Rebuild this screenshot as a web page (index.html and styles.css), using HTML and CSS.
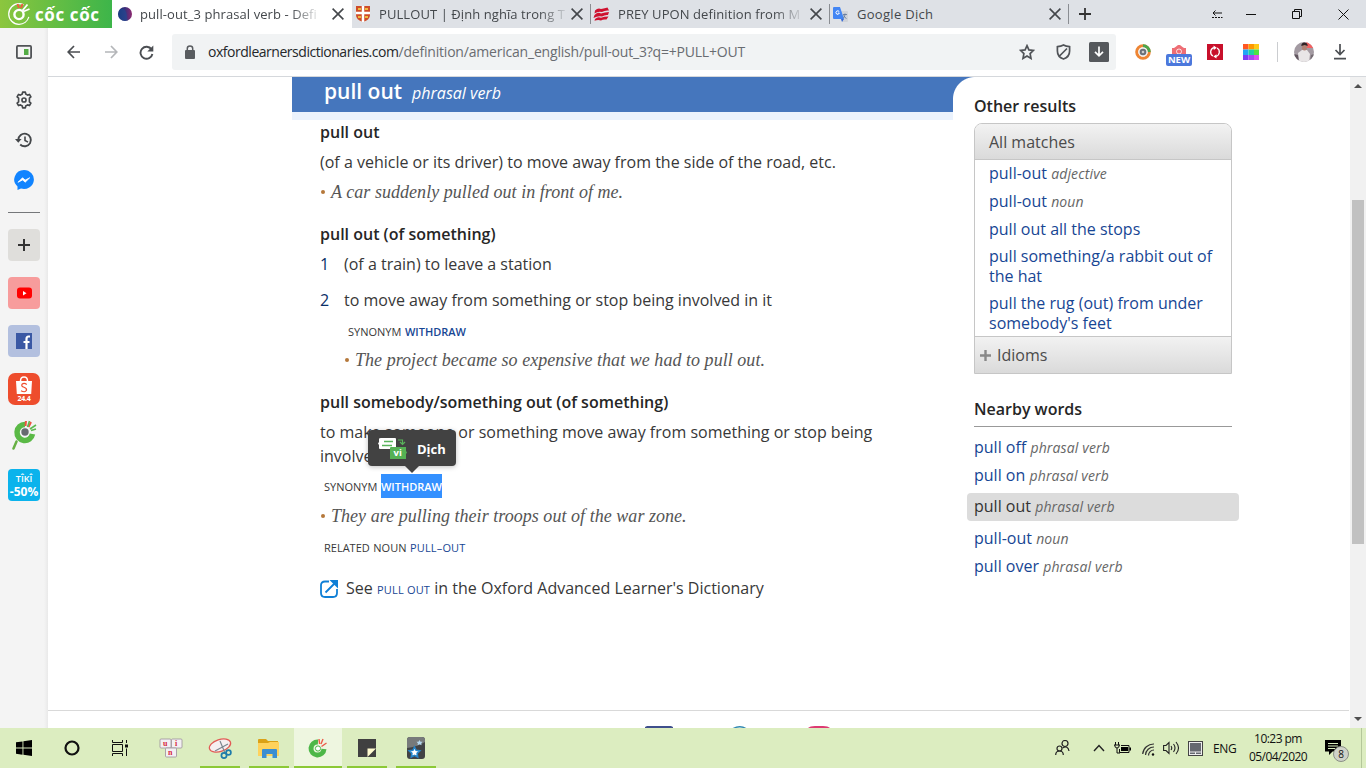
FILE: index.html
```html
<!DOCTYPE html>
<html lang="en">
<head>
<meta charset="utf-8">
<title>pull-out_3 phrasal verb</title>
<link rel="stylesheet" href="styles.css">
</head>
<body>
<div class="screen">
  <header class="tabbar">
    <div class="brand">
      <svg width="26" height="28" viewBox="0 0 26 28" fill="none"><circle cx="13" cy="14" r="10.300" stroke="#fff" stroke-width="1.200" stroke-dasharray="50 15" stroke-dashoffset="-3"/><circle cx="13" cy="14.500" r="4.600" stroke="#fff" stroke-width="2.400"/><path d="M11.500 4l1.500 4M16.500 4L15 8" stroke="#f05b3d" stroke-width="2"/><path d="M21.500 4.500l-5 6M23.500 9l-6 2.500" stroke="#fff" stroke-width="1.800"/></svg>
      <span class="wordmark">cốc cốc</span>
    </div>
    <div class="tab tab-active">
      <svg class="fav" width="14" height="14" viewBox="0 0 14 14"><defs><linearGradient id="ox" x1="0" x2="1"><stop offset="0" stop-color="#16276a"/><stop offset=".5" stop-color="#39307c"/><stop offset="1" stop-color="#8e286f"/></linearGradient></defs><circle cx="7" cy="7" r="7" fill="url(#ox)"/><path d="M2.200 2Q8 0 9 9q0 3 1 4.200Q6 15 2 12Q-1.500 7 2.200 2" fill="#1e4c95" opacity=".6"/></svg>
      <span class="tab-title">pull-out_3 phrasal verb - Defi</span>
      <svg class="close" width="12" height="12" viewBox="0 0 12 12"><path d="M.6.6l10.800 10.800M11.400.6L.6 11.400"/></svg>
    </div>
    <div class="tab tab-2">
      <svg class="fav" width="14" height="16" viewBox="0 0 14 16"><path d="M0 0h14v9q0 5-7 7q-7-2-7-7z" fill="#cf4c28"/><path d="M7 0v16M0 7h14" stroke="#fff" stroke-width="2.500"/><path d="M2 3h3M9 3h3M2 11h3M9 11h3" stroke="#efbc3f" stroke-width="2"/></svg>
      <span class="tab-title">PULLOUT | Định nghĩa trong T</span>
      <svg class="close" width="12" height="12" viewBox="0 0 12 12"><path d="M.6.6l10.800 10.800M11.400.6L.6 11.400"/></svg>
    </div>
    <div class="tab tab-3">
      <svg class="fav" width="17" height="14" viewBox="0 0 17 14"><path d="M2 3.500Q5 .5 8 2Q12 1 14.500.5L16 3.500Q12 3 9 5Q5 4 1.500 6.500zM1.500 8Q5 4.500 8 6.500Q12 5 16 5L15 8Q12 7.500 9 9.500Q5 8.500.5 11zM2 12Q5 9 8 10.800Q11 9.500 15.500 9.500L13.500 12.500Q10 12 8 13.500Q5 12.500 1.500 13.800z" fill="#cf1230"/></svg>
      <span class="tab-title">PREY UPON definition from M</span>
      <svg class="close" width="12" height="12" viewBox="0 0 12 12"><path d="M.6.6l10.800 10.800M11.400.6L.6 11.400"/></svg>
    </div>
    <div class="tab tab-4">
      <svg class="fav" width="15" height="15" viewBox="0 0 15 15"><path d="M5 4h9q1 0 1 1v9q0 1-1 1H9z" fill="#d0d3d8"/><path d="M1 0h6l4 12H1q-1 0-1-1V1q0-1 1-1" fill="#4285f4"/><path d="M8 12h3l-2 3z" fill="#3367d6"/><path d="M6.300 4.500Q5 3.200 3.600 4.200q-1.400 1.300 0 2.800q1.800 1.200 2.800-.9H4.900" stroke="#fff" fill="none"/><path d="M10 7.500h4M12 6.500v1q0 2-2 4M10.500 8.500q1 2 3 3" stroke="#5b7298" fill="none" stroke-width=".8"/></svg>
      <span class="tab-title">Google Dịch</span>
      <svg class="close" width="12" height="12" viewBox="0 0 12 12"><path d="M.6.6l10.800 10.800M11.400.6L.6 11.400"/></svg>
    </div>
    <svg class="newtab" width="12" height="12" viewBox="0 0 12 12"><path d="M6 0v12M0 6h12" stroke="#333" stroke-width="1.800"/></svg>
    <div class="winctl">
      <svg width="11" height="9" viewBox="0 0 11 9" fill="none" stroke="#111"><path d="M10 3H1M3.500.5L1 3l2.500 2.500"/><path d="M0 7.500h10.500" stroke-dasharray="2 1"/></svg>
      <svg width="10" height="10" viewBox="0 0 10 10" stroke="#111"><path d="M0 5.500h10"/></svg>
      <svg width="10" height="10" viewBox="0 0 10 10" fill="none" stroke="#111"><path d="M.5 2.500h7v7h-7zM2.500 2.500v-2h7v7h-2"/></svg>
      <svg width="11" height="11" viewBox="0 0 11 11" stroke="#111"><path d="M.5.5l10 10M10.500.5l-10 10"/></svg>
    </div>
  </header>

  <div class="middle">
    <aside class="side">
      <svg width="16" height="14" viewBox="0 0 16 14"><rect x=".9" y=".9" width="14.200" height="12.200" rx="1" fill="none" stroke="#505356" stroke-width="1.800"/><path d="M8 4h4.500v6H8z" fill="#53ab45"/></svg>
      <svg width="18" height="18" viewBox="0 0 24 24" fill="none" stroke="#44474a" stroke-width="2.200" stroke-linejoin="round"><circle cx="12" cy="12" r="2.700"/><path d="M9.700 4l.5-2.500h3.600l.5 2.500 2.500 1.500 2.500-.9 1.900 3.200-2 1.700v5l2 1.700-1.900 3.200-2.500-.9-2.500 1.500-.5 2.500h-3.600L9.700 20l-2.500-1.500-2.500.9-1.900-3.200 2-1.700v-5l-2-1.700 1.900-3.200 2.500.9z"/></svg>
      <svg width="18" height="16" viewBox="0 0 18 16" fill="none" stroke="#44474a" stroke-width="1.900"><path d="M3.300 8a6.300 6.300 0 1 1 1.900 4.500"/><path d="M10 4.500v4l3 1.600" stroke-width="1.600"/><path d="M0 7h6.600L3.300 10.800z" fill="#44474a" stroke="none"/></svg>
      <svg width="20" height="20" viewBox="0 0 20 20"><path d="M10 0a10 9.500 0 1 1-3 18.600L3.500 20v-3.500A10 9.500 0 0 1 10 0" fill="#1184ff"/><path d="M4 12.300L8.500 7.800l2.700 2.300 4.500-2.300-4.500 4.400-2.500-2.300z" fill="#fff" stroke="#fff" stroke-width=".8"/></svg>
      <div class="side-rule"></div>
      <div class="tile tile-add"><svg width="12" height="12" viewBox="0 0 12 12"><path d="M6 0v12M0 6h12" stroke="#333" stroke-width="2"/></svg></div>
      <div class="tile tile-yt"><svg width="15" height="12" viewBox="0 0 15 12"><rect y=".5" width="15" height="11" rx="3" fill="#f00"/><path d="M6 4v4.500l3.500-2.200z" fill="#fff"/></svg></div>
      <div class="tile tile-fb"><svg width="16" height="16" viewBox="0 0 16 16"><path d="M0 0h16v16H0z" fill="#3a58a4"/><path d="M14 3.500h-1.500q-2 0-2 2.500v10M7.500 9h6" stroke="#fff" stroke-width="2.200" fill="none"/></svg></div>
      <div class="tile tile-shop">
        <svg width="18" height="19" viewBox="0 0 18 19"><path d="M1 5h16l-.8 13H1.800z" fill="#fff"/><path d="M5.500 5q0-4 3.500-4t3.500 4" stroke="#fff" fill="none" stroke-width="1.500"/><path d="M11.800 8.500Q9 6.500 7 8.300q-1 2 2 3t2.500 3Q10 17 6 14.700" stroke="#ee4d2d" stroke-width="1.200" fill="none"/></svg>
        <span>24.4</span>
      </div>
      <svg class="coc" width="25" height="30" viewBox="0 0 25 30" fill="none"><path d="M1.500 28.500l3-7" stroke="#67b044" stroke-width="2.500" stroke-linecap="round"/><path d="M13 4.500A7.800 8 0 1 0 20.500 14" stroke="#5ab946" stroke-width="5.500"/><circle cx="13" cy="12" r="3.700" fill="#676a70"/><path d="M14 1l-.5 5M19 2l-2.500 5" stroke="#ef5240" stroke-width="2"/><path d="M17.500 1l-2 6M24 5l-6 4M24 9l-5 1.500" stroke="#5db950" stroke-width="1.600"/></svg>
      <div class="tile tile-tiki"><span class="tk1">TÎKÎ</span><span class="tk2">-50%</span></div>
    </aside>

    <div class="main">
      <div class="toolbar">
        <svg class="t-back" width="14" height="14" viewBox="0 0 14 14" fill="none" stroke="#4b4e52" stroke-width="1.700"><path d="M13 7H1.500M7 1L1.200 7 7 13"/></svg>
        <svg class="t-fwd" width="14" height="14" viewBox="0 0 14 14" fill="none" stroke="#b4b6b9" stroke-width="1.700"><path d="M1 7h11.500M7 1l5.800 6L7 13"/></svg>
        <svg class="t-rel" width="15" height="15" viewBox="0 0 15 15" fill="none"><path d="M12.500 4.400A6 6 0 1 0 13.400 9" stroke="#4b4e52" stroke-width="1.900"/><path d="M14.300.5v6H8.300z" fill="#4b4e52"/></svg>
        <div class="omnibox">
          <svg class="lock" width="10" height="14" viewBox="0 0 10 14"><rect y="5" width="10" height="9" rx="1" fill="#595c60"/><path d="M2.300 6V3.500a2.700 2.500 0 0 1 5.400 0V6" fill="none" stroke="#595c60" stroke-width="1.500"/></svg>
          <span class="url"><b>oxfordlearnersdictionaries.com</b>/definition/american_english/pull-out_3?q=+PULL+OUT</span>
          <svg width="16" height="16" viewBox="0 0 16 16" fill="none" stroke="#505357" stroke-width="1.700"><path d="M8 1.700l1.900 4.200 4.500.5-3.300 3.200.9 4.800L8 12l-4 2.400.9-4.800L1.600 6.400l4.500-.5z"/></svg>
          <svg class="shield" width="15" height="16" viewBox="0 0 15 16" fill="none" stroke="#505357" stroke-width="1.700"><path d="M7.500 1Q10 2.500 13.600 2.700V7q0 6-6.100 8Q1.400 13 1.400 7V2.700Q5 2.500 7.500 1zM11 4.500L3.500 12"/></svg>
          <svg width="20" height="20" viewBox="0 0 20 20"><rect width="20" height="20" rx="1.500" fill="#55585c"/><path d="M10 4.500v9M6 9.800l4 4 4-4" stroke="#fff" stroke-width="1.700" fill="none"/></svg>
        </div>
        <div class="exts">
          <svg width="16" height="16" viewBox="0 0 16 16" fill="none"><circle cx="8" cy="8" r="6.300" stroke="#ee8534" stroke-width="3"/><path d="M8 1.700A6.300 6.300 0 0 1 14.300 8" stroke="#4ca64c" stroke-width="3"/><circle cx="8" cy="8" r="4.600" fill="#eee"/><circle cx="8" cy="8" r="3.300" fill="#6a7078"/><circle cx="8" cy="8" r="1.300" fill="#ccc"/></svg>
          <div class="new-ext"><svg width="16" height="9" viewBox="0 0 16 9"><path d="M1 3h2l1.500-1L7 0h2l2.500 2L13 3h2v6H1z" fill="#ee6e75"/><circle cx="8" cy="6.500" r="2.500" fill="none" stroke="#fff" stroke-width=".8"/></svg><span>NEW</span></div>
          <svg width="16" height="16" viewBox="0 0 16 16"><path d="M0 0h16v16H0z" fill="#c8102b"/><path d="M6 12A4.500 4.500 0 0 1 7 3.700M10 4A4.500 4.500 0 0 1 9 12.300" fill="none" stroke="#fff" stroke-width="1.300"/><path d="M6.500 1.500l3.300 2.200-3 2.200zM9.500 10.200l-3.200 2.200 3.200 2.200z" fill="#fff"/></svg>
          <svg width="16" height="16" viewBox="0 0 16 16"><path d="M0 0h5.500v5.500H0z" fill="#ff5722"/><path d="M5.500 0H11v5.500H5.500z" fill="#ff9800"/><path d="M11 0h5v5.500h-5z" fill="#ffc918"/><path d="M0 5.500h5.500V11H0z" fill="#22a6f5"/><path d="M5.500 5.500H11V11H5.500z" fill="#1ed2a2"/><path d="M11 5.500h5V11h-5z" fill="#51e043"/><path d="M0 11h5.500v5H0z" fill="#7c3df4"/><path d="M5.500 11H11v5H5.500z" fill="#a846f2"/><path d="M11 11h5v5h-5z" fill="#dd50f1"/></svg>
          <div class="ext-rule"></div>
          <svg width="20" height="20" viewBox="0 0 20 20"><defs><clipPath id="av"><circle cx="10" cy="10" r="10"/></clipPath></defs><g clip-path="url(#av)"><path d="M0 0h20v20H0z" fill="#a39aa2"/><path d="M12 0h8v6h-8z" fill="#f45f60"/><path d="M5 20l-1-9 4-3h5l3 4-1 8z" fill="#e9e6e7"/><ellipse cx="10.500" cy="5" rx="2.700" ry="3.500" fill="#b08376"/><path d="M7.300 4q0-3.500 3.200-3.500T13.700 4l-3-1z" fill="#2f2226"/><path d="M0 12l4 1 1 7H0z" fill="#625760"/><path d="M17 13l3-1v8h-4z" fill="#756c73"/></g></svg>
          <svg width="12" height="16" viewBox="0 0 12 16" fill="none" stroke="#4b4e52" stroke-width="1.700"><path d="M6 0v10M1.500 6L6 10.500 10.500 6M0 14.700h12"/></svg>
        </div>
      </div>

      <div class="page">
        <div class="page-row">
          <main class="entry">
            <div class="entry-head"><h1>pull out</h1><span class="pos">phrasal verb</span></div>
            <div class="entry-body">
              <h2>pull out</h2>
              <p class="g6">(of a vehicle or its driver) to move away from the side of the road, etc.</p>
              <p class="ex g6"><i></i><span>A car suddenly pulled out in front of me.</span></p>
              <h2 class="g18">pull out (of something)</h2>
              <p class="sense g6"><span>1</span>(of a train) to leave a station</p>
              <p class="sense g12"><span>2</span>to move away from something or stop being involved in it</p>
              <p class="xref xin g7">SYNONYM <b>WITHDRAW</b></p>
              <p class="ex ein g5"><i></i><span>The project became so expensive that we had to pull out.</span></p>
              <h2 class="g18">pull somebody/something out (of something)</h2>
              <p class="g6">to make someone or something move away from something or stop being<br>involved in it</p>
              <p class="xref g6">SYNONYM <b class="sel">WITHDRAW<span class="pop"><svg width="30" height="22" viewBox="0 0 30 22"><path d="M3 1h14q1 0 1 1v9q0 1-1 1H2q-1 0-1-1V8L0 6.500 1 5V2q0-1 2-1" fill="#fff"/><path d="M6 4.500h9M4 8.500h10" stroke="#59b45b" stroke-width="1.300"/><path d="M20 3h4.500v4M22 5l2.500 2.500L27 5" stroke="#59b45b" fill="none" stroke-width="1.200"/><path d="M13 10h15v4l1 1.500-1 1.500v5H12v-11q0-1 1-1" fill="#55b154"/><text x="15.500" y="19" class="vi">vi</text></svg><em>Dịch</em></span></b></p>
              <p class="ex g6"><i></i><span>They are pulling their troops out of the war zone.</span></p>
              <p class="xref g7">RELATED NOUN <b class="med">PULL–OUT</b></p>
              <p class="see g17"><svg width="18" height="18" viewBox="0 0 18 18" fill="none" stroke="#0f7fd6" stroke-width="1.800"><path d="M9 1.500H5Q1 1.500 1 5v8q0 4 4 4h8q4 0 4-4V9M5.500 12.500L15.500 2.500"/><path d="M9.500 0H18v8.500z" fill="#0f7fd6" stroke="none"/></svg><span>See <b>PULL OUT</b> in the Oxford Advanced Learner's Dictionary</span></p>
            </div>
          </main>
          <aside class="right">
            <h3>Other results</h3>
            <div class="matches">
              <div class="m-head">All matches</div>
              <ul>
                <li>pull-out <i>adjective</i></li>
                <li>pull-out <i>noun</i></li>
                <li>pull out all the stops</li>
                <li class="tight">pull something/a rabbit out of<br>the hat</li>
                <li class="tight">pull the rug (out) from under<br>somebody's feet</li>
              </ul>
              <div class="m-head m-foot"><svg width="11" height="11" viewBox="0 0 11 11"><path d="M5.500 0v11M0 5.500h11" stroke="#888" stroke-width="2.400"/></svg>Idioms</div>
            </div>
            <h3 class="near">Nearby words</h3>
            <ul class="nearby">
              <li>pull off <i>phrasal verb</i></li>
              <li>pull on <i>phrasal verb</i></li>
              <li class="cur">pull out <i>phrasal verb</i></li>
              <li>pull-out <i>noun</i></li>
              <li>pull over <i>phrasal verb</i></li>
            </ul>
          </aside>
          <div class="scroll"><span class="up"></span><div class="thumb"></div><span class="down"></span></div>
        </div>
        <footer class="foot">
          <svg width="190" height="3" viewBox="0 0 190 3"><path d="M0 3V2l2-1h24l2 1v1z" fill="#3f4f8c"/><path d="M88 3.500q7-3.500 13 0" fill="none" stroke="#2f87b0" stroke-width="1.300"/><path d="M163 3q2-2 7-2h8q5 0 7 2z" fill="#dd3a72"/></svg>
        </footer>
      </div>
    </div>
  </div>

  <footer class="taskbar">
    <div class="cell c1"><svg width="16" height="16" viewBox="0 0 16 16"><path d="M0 2.300L6.500 1.400V7.600H0zM7.400 1.200L16 0v7.600H7.400zM0 8.500h6.500v6.200L0 13.800zM7.400 8.500H16V16l-8.600-1.200z"/></svg></div>
    <div class="cell c1"><svg width="16" height="16" viewBox="0 0 16 16"><circle cx="8" cy="8" r="6.500" fill="none" stroke="#111" stroke-width="2.200"/></svg></div>
    <div class="cell c3"><svg width="17" height="16" viewBox="0 0 17 16" fill="none" stroke="#111" stroke-width="1"><path d="M.5 0v2.500h10V0M.5 16v-2.500h10V16M.5 4.500h10v7H.5zM14.500 0v3M14.500 8.500V16"/><path d="M13 4.500h3v3h-3z" fill="#111" stroke="none"/></svg></div>
    <div class="cell"><svg width="24" height="20" viewBox="0 0 24 20"><g fill="#f3f0f3" stroke="#9b8f9b" stroke-width=".8"><rect x="1" y="1" width="11" height="9" rx="1"/><rect x="12.500" y="1" width="10.500" height="9" rx="1"/><rect x="6.500" y="10" width="11" height="9" rx="1"/></g><g class="keys"><text x="4" y="8">u</text><text x="16" y="8">i</text><text x="9" y="16.500">n</text></g></svg></div>
    <div class="cell run"><svg width="24" height="23" viewBox="0 0 24 23" fill="none"><ellipse cx="12" cy="8.500" rx="11" ry="6" transform="rotate(-18 12 8.500)" fill="#f5eff1" stroke="#e25b55" stroke-width="1.300"/><path d="M12 4l5 12M20 7l-13 7" stroke="#7b8690" stroke-width="1.200"/><circle cx="16" cy="18.500" r="2.600" stroke="#1f7caa" stroke-width="1.700"/><circle cx="20.500" cy="15.500" r="2.400" stroke="#1f7caa" stroke-width="1.700"/></svg></div>
    <div class="cell run"><svg width="22" height="19" viewBox="0 0 22 19"><path d="M0 1q0-1 1-1h7l2 2h10v4H0z" fill="#dba116"/><path d="M0 4h10l2-1h9v14H0z" fill="#ffd25c"/><path d="M4 19v-8q0-1 1-1h13q1 0 1 1v8h-4.500v-4h-6v4z" fill="#3b8ed1"/></svg></div>
    <div class="cell run act"><svg width="20" height="20" viewBox="0 0 20 20" fill="none"><path d="M10 4A6.500 6.500 0 1 0 16 11" stroke="#4db748" stroke-width="5"/><circle cx="10" cy="10.500" r="2.600" fill="#fff" stroke="#4db748" stroke-width="1"/><path d="M11 1l.6 5M15 1l-2 5M18.500 5l-5 3.500" stroke="#ec5a48" stroke-width="1.400"/></svg></div>
    <div class="cell run"><svg width="18" height="18" viewBox="0 0 18 18"><path d="M0 0h18v18H0z" fill="#404040"/><path d="M9.500 9.500H18L9.500 18z" fill="#fffbd0"/></svg></div>
    <div class="cell run"><svg width="18" height="22" viewBox="0 0 18 22"><rect width="18" height="22" rx="3" fill="#414346"/><path d="M0 11Q10 10 18 5V3q0-3-3-3H3Q0 0 0 3z" fill="#777a7b"/><path d="M7.500 10l1.600 3.300 3.700.5-2.700 2.600.6 3.600-3.200-1.700L4.300 20l.6-3.600-2.700-2.600 3.700-.5z" fill="#fff" stroke="#2585ca" stroke-width="1.600"/><path d="M12.500 3l1 1.700h2l-1.300 1.500.4 2-2.100-.9-2 .9.400-2-1.400-1.500h2z" fill="#b4d7ef"/></svg></div>
    <div class="tray">
      <svg class="ppl" width="15" height="16" viewBox="0 0 15 16" fill="none" stroke="#222" stroke-width="1.200"><circle cx="4.500" cy="8.500" r="2.500"/><path d="M.7 15q0-4 3.800-4t3.800 4"/><circle cx="10" cy="3.500" r="3"/><path d="M7.500 8q5.500-3 6.500 3"/></svg>
      <svg class="chev" width="12" height="8" viewBox="0 0 12 8"><path d="M1 7l5-5.500L11 7" fill="none" stroke="#222" stroke-width="1.400"/></svg>
      <svg class="bat" width="17" height="12" viewBox="0 0 17 12"><path d="M1.500 0v3M4.500 0v3M0 3h6M.7 3q0 3 2.300 3T5.300 3M3 6v5h3" fill="none" stroke="#111"/><path d="M7 3.500h8v7H5.500V7" stroke="#111" fill="none"/><path d="M7 5h7v4H7zM15.500 5.500H17v3h-1.500z"/></svg>
      <svg class="wifi" width="13" height="13" viewBox="0 0 13 13" fill="none" stroke="#333" stroke-width="1.200"><path d="M.7 11A11 11 0 0 1 12 1M3.500 12A8.500 8.500 0 0 1 12 4M6.500 12.500A5.500 5.500 0 0 1 12 7"/><circle cx="11" cy="11.500" r="1.200" fill="#111" stroke="none"/></svg>
      <svg class="vol" width="17" height="14" viewBox="0 0 17 14" fill="none" stroke="#222" stroke-width="1.100"><path d="M.6 4.500H3L6 1.500v11L3 9.500H.6zM8 5q1.500 2 0 4M10.500 3q3 4 0 8M13 1q5 6 0 12"/></svg>
      <svg class="pad" width="15" height="15" viewBox="0 0 15 15"><path d="M0 0h15v15H0z" fill="#444"/><path d="M1 1h13v13H1z" fill="#eee"/><path d="M2 2h11v8.500H2zM2 11.500h5V13H2zM8 11.500h5V13H8z" fill="#666970"/></svg>
      <span class="lang">ENG</span>
      <div class="clock"><span>10:23 pm</span><span>05/04/2020</span></div>
      <div class="note"><svg width="16" height="16" viewBox="0 0 16 16"><path d="M0 0h16v11.500H7.500L4 15v-3.500H0z"/><path d="M3 3.500h10M3 6h10M3 8.500h7" stroke="#d9edbe" stroke-width="1.100"/></svg><span>8</span></div>
      <div class="peek"></div>
    </div>
  </footer>
</div>
</body>
</html>
```
FILE: styles.css
```css
* { box-sizing: border-box; }
body { margin: 0; overflow: hidden; font-family: "Open Sans", "Noto Sans", sans-serif; }
h1, h2, h3, p, ul { margin: 0; padding: 0; list-style: none; font-weight: 400; }
svg { flex: none; display: block; }
.screen { width: 1366px; height: 768px; display: flex; flex-direction: column; background: #fff; }

/* tab strip */
.tabbar { height: 28px; flex: none; display: flex; align-items: center; background: #dee1e6; }
.brand { width: 112px; height: 28px; flex: none; padding-left: 6px; display: flex; align-items: center; gap: 3px; background: linear-gradient(90deg, #8cc63e, #3db54a); }
.wordmark { color: #fff; font: 700 17px/28px "Open Sans", sans-serif; white-space: nowrap; letter-spacing: .6px; padding-top: 1px; }
.tab { height: 28px; flex: none; display: flex; align-items: center; position: relative; }
.tab-active { background: #fff; width: 240px; padding-left: 6px; }
.tab-2 { width: 239px; padding-left: 4px; }
.tab-3 { width: 239px; padding-left: 2px; }
.tab-4 { width: 239px; padding-left: 3px; }
.tab-2, .tab-3, .tab-4 { background: linear-gradient(#8a8d92, #8a8d92) right center / 1px 20px no-repeat; }
.tab-title { font-size: 13px; line-height: 20px; letter-spacing: .08px; color: #44484c; white-space: nowrap; -webkit-mask-image: linear-gradient(90deg, #000 calc(100% - 26px), rgba(0,0,0,.15)); mask-image: linear-gradient(90deg, #000 calc(100% - 26px), rgba(0,0,0,.15)); }
.tab-active .tab-title { margin-left: 8px; }
.tab-2 .tab-title { margin-left: 9px; }
.tab-3 .tab-title { margin-left: 8px; }
.tab-4 .tab-title { margin-left: 9px; letter-spacing: .3px; -webkit-mask-image: none; mask-image: none; }
.close { position: absolute; right: 8px; top: 8px; fill: none; stroke: #44474b; stroke-width: 1.6; }
.newtab { margin-left: 10px; }
.winctl { flex: 1; display: flex; align-items: center; margin-left: 121px; height: 26px; }
.winctl svg:nth-child(1) { margin-right: 23px; }
.winctl svg:nth-child(2) { margin-right: 36px; }
.winctl svg:nth-child(3) { margin-right: 36px; }

.middle { height: 700px; flex: none; display: flex; }
.side { width: 48px; flex: none; background: linear-gradient(90deg, #f4f4f4 44px, #e9e9e9); display: flex; flex-direction: column; align-items: center; padding-top: 17px; }
.side > svg:nth-child(2) { margin-top: 32px; }
.side > svg:nth-child(3) { margin-top: 23px; }
.side > svg:nth-child(4) { margin-top: 22px; }
.side-rule { width: 32px; height: 1px; background: #75777a; margin: 22px 0 16px; }
.tile { width: 32px; height: 32px; flex: none; border-radius: 4px; margin-bottom: 16px; display: flex; flex-direction: column; align-items: center; justify-content: center; }
.tile-add { background: #dfdedb; }
.tile-yt { background: #f79c9c; }
.tile-fb { background: #b3c0df; }
.tile-shop { background: #ee4d2d; border-radius: 7px; color: #fff; font: 700 7px/8px "Open Sans", sans-serif; letter-spacing: -.3px; margin-bottom: 15px; }
.coc { margin-bottom: 19px; }
.tile-tiki { background: #0bb3ec; color: #fff; font-family: "Open Sans", sans-serif; margin: 0; }
.tk1 { font-size: 9px; line-height: 13px; font-weight: 600; }
.tk2 { font-size: 12px; line-height: 14px; font-weight: 700; }

/* toolbar */
.main { flex: 1; min-width: 0; }
.toolbar { height: 49px; display: flex; align-items: center; border-bottom: 1px solid #d5d8dc; }
.t-back { margin-left: 19px; }
.t-fwd { margin-left: 23px; }
.t-rel { margin-left: 21px; }
.omnibox { width: 944px; height: 36px; margin-left: 18px; background: #f1f3f4; border-radius: 3px; display: flex; align-items: center; padding: 0 7px 0 13px; }
.url { flex: 1; margin-left: 13px; font-size: 14px; color: #696c71; white-space: nowrap; line-height: 20px; letter-spacing: -.2px; }
.url b { font-weight: 400; color: #24272a; letter-spacing: -.47px; }
.shield { margin: 0 18px 0 21px; }
.exts { flex: 1; display: flex; align-items: center; margin-left: 19px; }
.new-ext { width: 26px; display: flex; flex-direction: column; align-items: center; margin: 7px 15px 0; }
.new-ext span { width: 26px; height: 12px; border-radius: 2px; background: #4c78dc; color: #fff; font-size: 9.5px; line-height: 12px; font-weight: 700; text-align: center; }
.exts > svg:nth-child(3) { margin-right: 20px; }
.ext-rule { width: 1px; height: 20px; background: #cbcdd0; margin: 0 16px 0 18px; }
.exts > svg:nth-child(6) { margin-right: 20px; }

/* dictionary page */
.page { height: 651px; position: relative; }
.page-row { display: flex; height: 651px; }
.entry { width: 661px; margin-left: 244px; flex: none; }
.entry-head { height: 43px; background: #4576bd; border-bottom: 8px solid #eaf2fd; color: #fff; padding-left: 32px; display: flex; align-items: baseline; }
h1 { font-size: 21px; line-height: 29px; font-weight: 600; }
.pos { font-size: 16px; font-style: italic; font-weight: 500; margin-left: 10px; }
.entry-body { padding-left: 28px; font-size: 16px; line-height: 24px; color: #383838; white-space: nowrap; }
h2 { font-size: 16px; line-height: 24px; font-weight: 600; color: #262626; }
.g5 { margin-top: 5px; } .g6 { margin-top: 6px; } .g7 { margin-top: 7px; }
.g12 { margin-top: 12px; } .g17 { margin-top: 17px; } .g18 { margin-top: 18px; }
.ex { font-family: "Liberation Serif", serif; font-style: italic; font-size: 18px; letter-spacing: .04px; color: #555; display: flex; align-items: center; height: 24px; }
.ex i { width: 4px; height: 4px; border-radius: 2px; background: #b5783a; margin: 0 6px 0 1px; }
.ein { padding-left: 24px; }
.sense { display: flex; }
.sense span { width: 24px; color: #0a3068; }
.xref { font-size: 11px; line-height: 26px; padding-left: 4px; height: 24px; word-spacing: .7px; }
.xin { padding-left: 28px; }
.xref b { font-weight: 600; color: #174694; }
.xref .med { font-weight: 500; letter-spacing: .15px; }
.xref .sel { display: inline-block; height: 24px; background: #3390ff; color: #fff; position: relative; }
.pop { position: absolute; left: -13px; top: -44px; width: 88px; height: 36px; border-radius: 4px; background: #424242; box-shadow: 0 1px 5px rgba(0,0,0,.25); display: flex; align-items: center; padding-left: 10px; gap: 9px; }
.pop::after { content: ""; position: absolute; left: 36px; top: 35px; border: 8px solid transparent; border-top-color: #424242; border-bottom: 0; }
.pop em { font: 700 13px/20px "Open Sans", sans-serif; padding-top: 2px; }
.vi { font: 700 9.5px "Open Sans", sans-serif; fill: #fff; }
.see { display: flex; align-items: center; gap: 8px; }
.see b { font-size: 11px; font-weight: 500; color: #174694; letter-spacing: .2px; }
.right { width: 286px; padding: 17px 0 0 21px; flex: none; position: relative; }
.right::before { content: ""; position: absolute; left: 0; top: 0; width: 22px; height: 22px; background: radial-gradient(circle at 22px 22px, #fff 21.500px, #4576bd 22.500px); }
h3 { font-size: 16px; line-height: 24px; font-weight: 600; color: #262626; }
.matches { width: 258px; height: 251px; margin-top: 5px; border: 1px solid #c6c6c6; border-radius: 8px 8px 0 0; overflow: hidden; display: flex; flex-direction: column; }
.m-head { height: 36px; flex: none; padding: 0 14px; line-height: 36px; font-size: 16px; color: #4b4b4b; border-bottom: 1px solid #c6c6c6; background: linear-gradient(#f2f2f2, #dadada); }
.m-foot { display: flex; align-items: center; gap: 6px; padding-left: 5px; margin-top: auto; height: 37px; border-top: 1px solid #c6c6c6; border-bottom: 0; }
.matches ul { padding: 3px 0 0 14px; white-space: nowrap; }
.matches li { font-size: 16px; line-height: 20px; color: #174694; margin-bottom: 8px; }
.matches li:nth-child(3), .matches li.tight { margin-bottom: 7px; }
.matches li.tight:last-child { margin-bottom: 0; }
li i { font-size: 14px; line-height: 14px; letter-spacing: .15px; color: #666; }
.near { margin-top: 23px; width: 258px; height: 30px; border-bottom: 1px solid #999; }
.nearby { padding-top: 6px; }
.nearby li { font-size: 16px; line-height: 28px; height: 28px; color: #174694; white-space: nowrap; }
.nearby .cur { width: 272px; margin: 4px 0 3px -7px; padding-left: 7px; line-height: 27px; background: #dcdcdc; border-radius: 4px; color: #333; }
.scroll { width: 16px; margin-left: auto; background: #f1f1f1; display: flex; flex-direction: column; align-items: center; }
.up, .down { border: 4px solid transparent; }
.up { border-top: 0; border-bottom-color: #505050; margin-top: 7px; }
.down { border-bottom: 0; border-top-color: #505050; margin-top: auto; margin-bottom: 7px; }
.thumb { width: 12px; height: 344px; background: #c1c1c1; margin-top: 112px; }
.foot { position: absolute; left: 0; right: 17px; bottom: 0; height: 18px; border-top: 1px solid #d9d9d9; padding: 14px 0 0 597px; background: #fff; }

/* taskbar */
.taskbar { height: 40px; flex: none; background: #dcedc0; display: flex; }
.cell { width: 48px; height: 40px; display: flex; align-items: center; justify-content: center; margin-right: 1px; flex: none; }
.c1 { margin-right: 0; }
.c3 { margin-right: 3px; }
.run { background: linear-gradient(#8cc936, #8cc936) center bottom / 40px 2px no-repeat; }
.act { background: linear-gradient(#8cc936, #8cc936) center bottom / 48px 2px no-repeat, #eef6e0; }
.keys { font: 700 8px "Liberation Serif", serif; fill: #d6283e; }
.tray { flex: 1; display: flex; align-items: center; color: #111; }
.ppl { margin-left: 614px; }
.chev { margin-left: 23px; }
.bat { margin-left: 9px; }
.wifi { margin-left: 11px; margin-top: 3px; }
.vol { margin-left: 8px; }
.pad { margin-left: 8px; }
.lang { font-size: 12px; width: 23px; margin-left: 10px; letter-spacing: -.3px; }
.clock { width: 58px; margin-left: 13px; display: flex; flex-direction: column; align-items: center; font-size: 12px; line-height: 18px; letter-spacing: -.55px; white-space: nowrap; }
.note { position: relative; margin-left: 18px; }
.note span { position: absolute; left: 8px; top: 6px; width: 16px; height: 16px; border-radius: 50%; background: #cfd2c9; border: 1px solid #8a8f86; font-size: 10px; line-height: 14px; text-align: center; }
.peek { margin-left: auto; margin-right: 4px; width: 1px; height: 40px; background: #b4c79a; }
```
